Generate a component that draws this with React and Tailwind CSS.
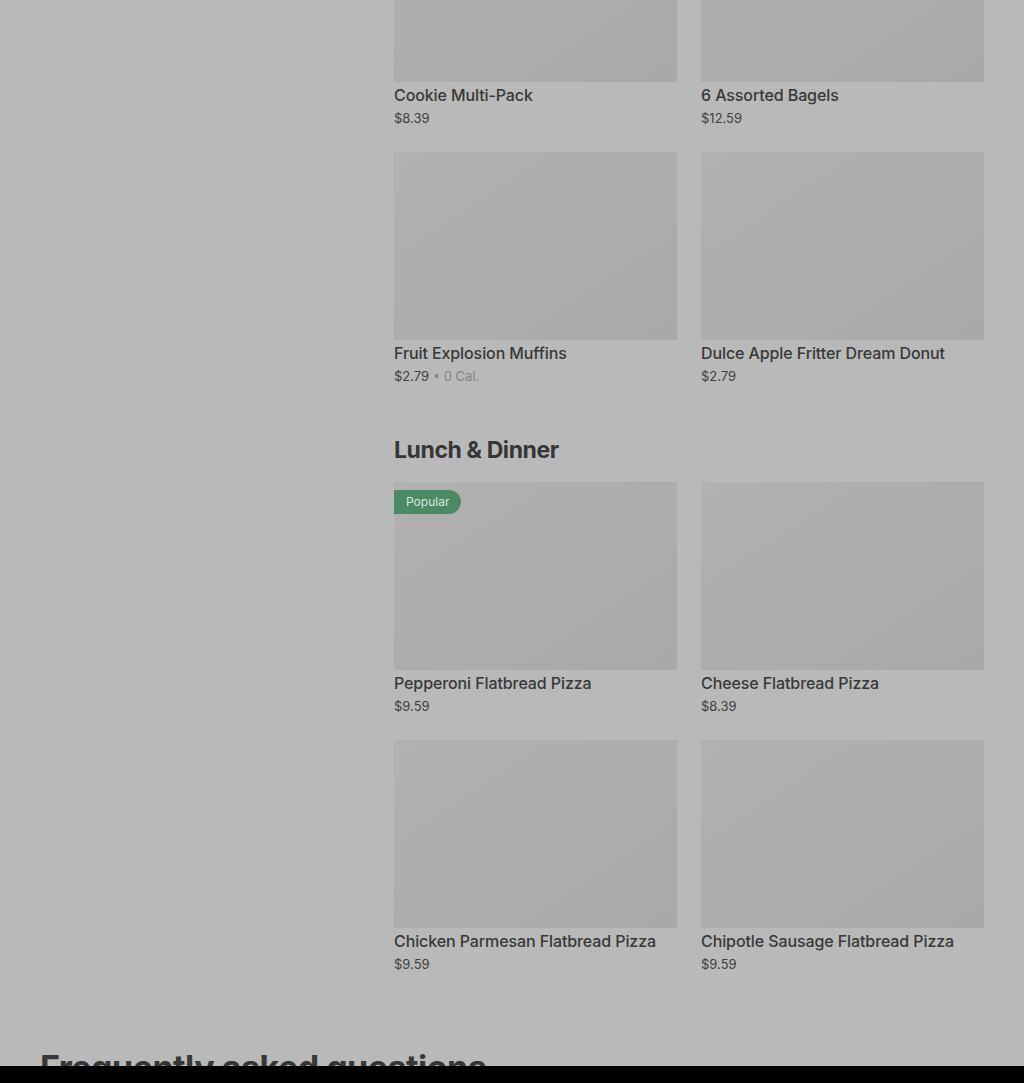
import React from 'react';

const sections = [
  {
    title: null,
    items: [
      { name: 'Cookie Multi-Pack', price: '$8.39' },
      { name: '6 Assorted Bagels', price: '$12.59' },
      { name: 'Fruit Explosion Muffins', price: '$2.79', cal: '0 Cal.' },
      { name: 'Dulce Apple Fritter Dream Donut', price: '$2.79' },
    ],
  },
  {
    title: 'Lunch & Dinner',
    items: [
      { name: 'Pepperoni Flatbread Pizza', price: '$9.59', popular: true },
      { name: 'Cheese Flatbread Pizza', price: '$8.39' },
      { name: 'Chicken Parmesan Flatbread Pizza', price: '$9.59' },
      { name: 'Chipotle Sausage Flatbread Pizza', price: '$9.59' },
    ],
  },
];

function ItemCard({ item }) {
  return (
    <div className="flex flex-col">
      <div className="relative h-[188px] bg-gradient-to-br from-[#b1b1b1] to-[#a9a9a9]">
        {item.popular && (
          <span className="absolute left-0 top-2 h-6 px-3 flex items-center rounded-r-full bg-[#4b8a63] text-[12px] text-[#d8e8dd]">
            Popular
          </span>
        )}
      </div>
      <div className="mt-px text-[16px] leading-6 font-medium text-[#383838] tracking-[-0.1px]">{item.name}</div>
      <div className="mt-[1px] text-[13px] leading-5 text-[#404040]">
        {item.price}
        {item.cal && <span className="text-[#858585]"> • {item.cal}</span>}
      </div>
    </div>
  );
}

export default function App() {
  return (
    <div
      className="min-h-[1083px] bg-[#b9b9b9] overflow-hidden"
      style={{ fontFamily: 'Inter, "Noto Sans", sans-serif' }}
    >
      <div className="flex -mt-[106px]">
        <aside className="w-[394px] shrink-0" />
        <main className="w-[590px] flex flex-col">
          {sections.map((sec, i) => (
            <section key={i} className={sec.title ? 'mt-12' : ''}>
              {sec.title && (
                <h2 className="text-[23px] leading-8 font-bold text-[#363636] tracking-[-0.4px] mb-4">{sec.title}</h2>
              )}
              <div className="grid grid-cols-2 gap-x-6 gap-y-6">
                {sec.items.map((it) => (
                  <ItemCard key={it.name} item={it} />
                ))}
              </div>
            </section>
          ))}
        </main>
      </div>
      <div className="px-10 mt-[72px]">
        <h2 className="text-[34px] leading-[44px] font-bold text-[#363636] tracking-[-0.5px]">Frequently asked questions</h2>
      </div>
      <div className="fixed left-0 right-0 bottom-0 h-[17px] bg-black" />
    </div>
  );
}
